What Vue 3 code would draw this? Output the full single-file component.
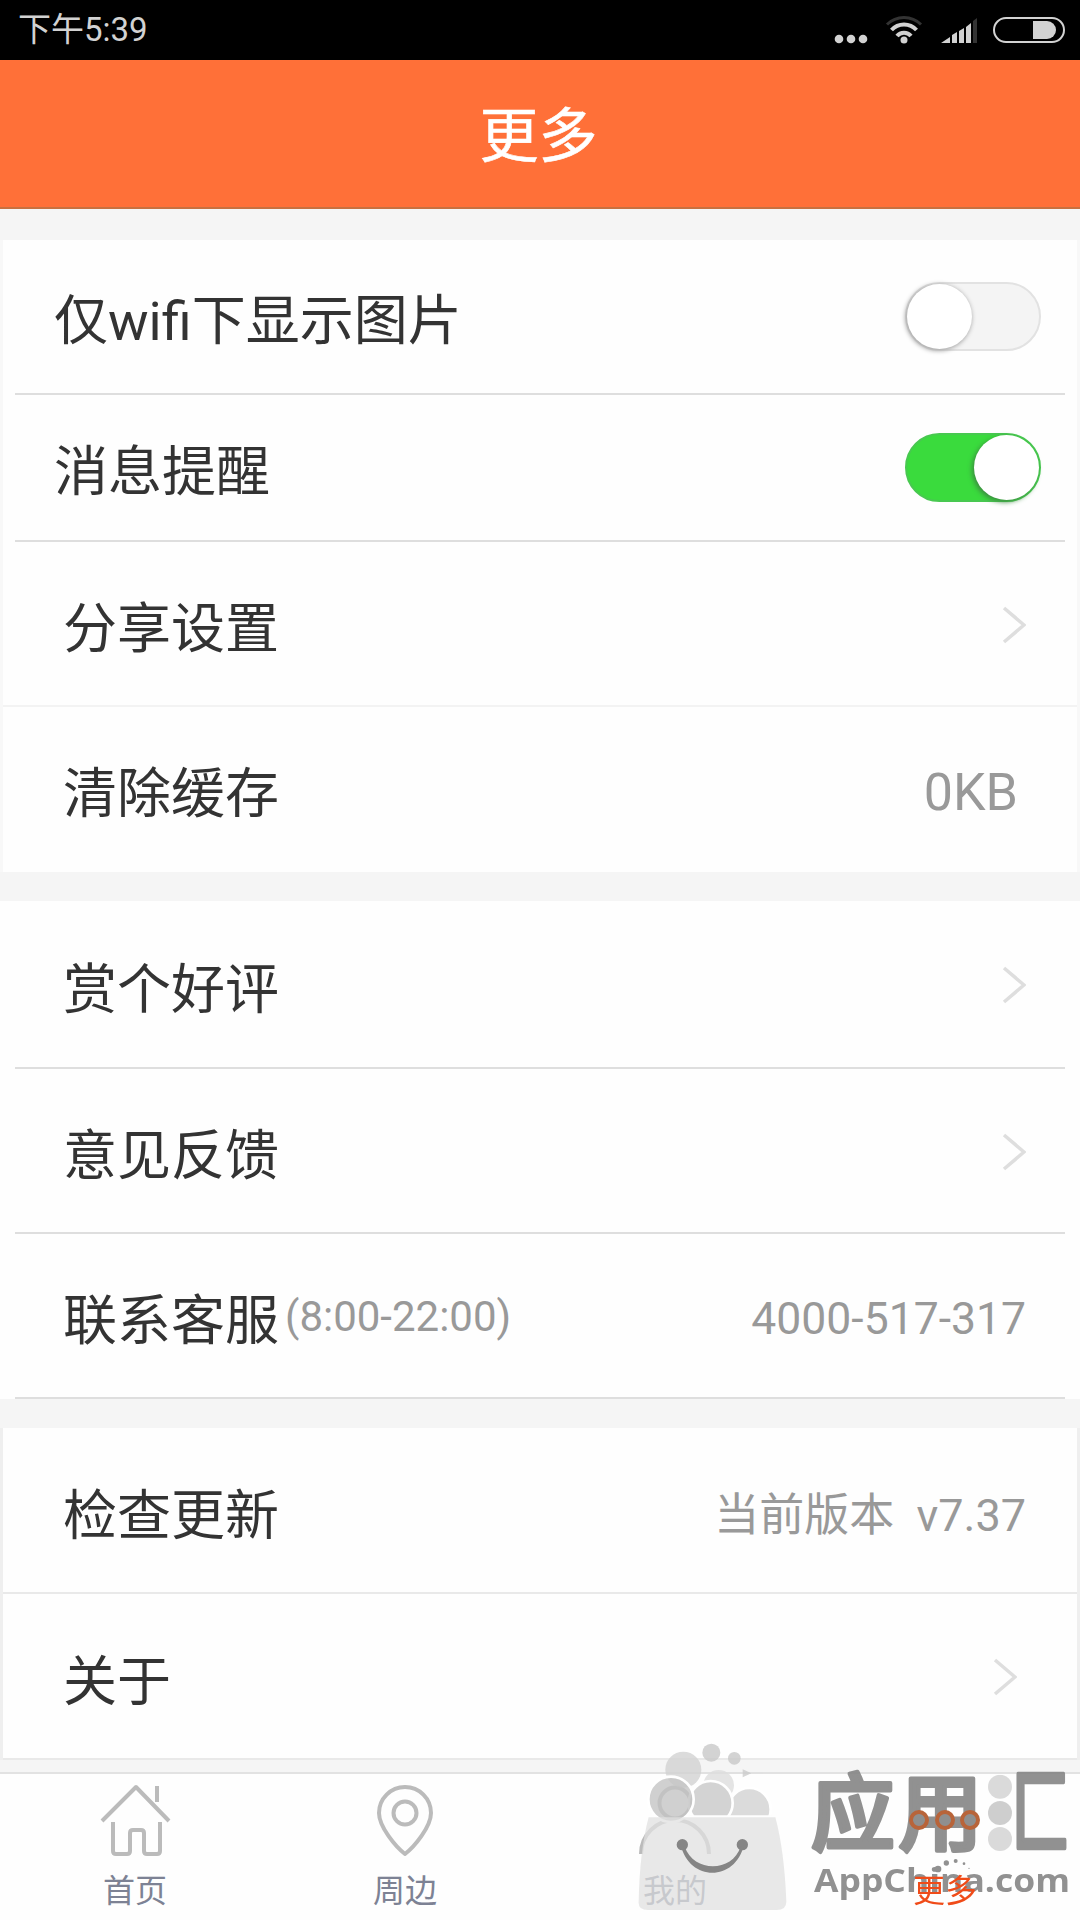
<script setup>
import { ref } from 'vue'

const wifiOnly = ref(false)
const notify = ref(true)
const current = ref('more')

const tabs = [
  { key: 'home', label: '首页' },
  { key: 'nearby', label: '周边' },
  { key: 'mine', label: '我的' },
  { key: 'more', label: '更多' },
]
</script>

<template>
  <main class="app">
    <div class="status">
      <span class="time">下午5:39</span>
      <svg class="status-icons" width="236" height="60" viewBox="0 0 236 60">
        <g fill="#d2d2d2">
          <circle cx="10" cy="39" r="4.3" />
          <circle cx="22" cy="39" r="4.3" />
          <circle cx="34" cy="39" r="4.3" />
          <circle cx="75" cy="40" r="3.5" />
          <path d="M112 43l9-6v6zM123 35l5-3v11h-5zM130 31l5-3v15h-5zM137 27l5-4v20h-5z" />
          <path d="M204 21h14a9 9 0 0 1 0 18h-14z" />
        </g>
        <path d="M144 21l4-3v25h-4z" fill="#333" />
        <g fill="none" stroke="#d2d2d2" stroke-width="4">
          <path d="M68 36a9 9 0 0 1 14 0" />
          <path d="M62.500 30a17 17 0 0 1 25 0" />
          <path d="M58 24.500a24 24 0 0 1 34 0" stroke="#333" stroke-width="3" />
          <rect x="165" y="18" width="70" height="24" rx="12" stroke-width="2" />
        </g>
      </svg>
    </div>

    <header class="header">更多</header>

    <section class="group first">
      <div class="row switch-row">
        <span>仅wifi下显示图片</span>
        <button class="switch" :class="{ on: wifiOnly }" @click="wifiOnly = !wifiOnly"><i></i></button>
      </div>
      <div class="row switch-row short">
        <span>消息提醒</span>
        <button class="switch" :class="{ on: notify }" @click="notify = !notify"><i></i></button>
      </div>
      <div class="row pale">
        <span>分享设置</span>
        <svg class="arrow" width="24" height="38" viewBox="0 0 24 38"><path d="M2 2l20 17L2 36" /></svg>
      </div>
      <div class="row none">
        <span>清除缓存</span>
        <span class="value cache">0KB</span>
      </div>
    </section>

    <section class="group second">
      <div class="row tall">
        <span>赏个好评</span>
        <svg class="arrow" width="24" height="38" viewBox="0 0 24 38"><path d="M2 2l20 17L2 36" /></svg>
      </div>
      <div class="row">
        <span>意见反馈</span>
        <svg class="arrow" width="24" height="38" viewBox="0 0 24 38"><path d="M2 2l20 17L2 36" /></svg>
      </div>
      <div class="row">
        <span class="service">联系客服<small>(8:00-22:00)</small></span>
        <span class="value phone">4000-517-317</span>
      </div>
    </section>

    <section class="group third">
      <div class="row full">
        <span>检查更新</span>
        <span class="value">当前版本&nbsp; v7.37</span>
      </div>
      <div class="row full">
        <span>关于</span>
        <svg class="arrow inset" width="24" height="38" viewBox="0 0 24 38"><path d="M2 2l20 17L2 36" /></svg>
      </div>
    </section>

    <nav class="tabs">
      <a v-for="tab in tabs" :key="tab.key" class="tab" :class="{ active: current == tab.key }" @click="current = tab.key">
        <svg width="72" height="72" viewBox="0 0 72 72">
          <template v-if="tab.key == 'home'">
            <path d="M3 37L37 3l33 34M58 2v16" />
            <path d="M14 38v29q0 3 3 3h11q3 0 3-3V49q0-3 3-3h8q3 0 3 3v18q0 3 3 3h10q3 0 3-3V38" />
          </template>
          <template v-else-if="tab.key == 'nearby'">
            <path d="M36 70C27 63 10 43 10 29a26 26 0 0 1 52 0C62 43 45 63 36 70z" />
            <circle cx="36" cy="29" r="11.500" />
          </template>
          <template v-else-if="tab.key == 'mine'">
            <circle cx="36" cy="19" r="15.500" />
            <path d="M2 70a34 34 0 0 1 68 0" />
          </template>
          <template v-else>
            <circle cx="10" cy="36" r="8" />
            <circle cx="36" cy="36" r="8" />
            <circle cx="61" cy="36" r="8" />
          </template>
        </svg>
        <span>{{ tab.label }}</span>
      </a>
    </nav>

    <svg class="mark" width="460" height="200" viewBox="0 0 1380 600">
      <clipPath id="above-bag">
        <rect x="0" y="0" width="600" height="286" />
      </clipPath>
      <!-- bag with bubbles -->
      <g clip-path="url(#above-bag)" opacity=".8">
        <circle cx="274" cy="98" r="27" fill="#c8c8c8" />
        <circle cx="343" cy="115" r="19" fill="#c8c8c8" />
        <path d="M368 148l26 12-26 12z" fill="#ccc" />
        <circle cx="296" cy="196" r="46" fill="#dedede" />
        <circle cx="190" cy="149" r="54" fill="#d2d2d2" />
        <g stroke="#fff" stroke-width="8">
          <circle cx="388" cy="268" r="64" fill="#d2d2d2" />
          <circle cx="272" cy="249" r="66" fill="#c9c9c9" />
        </g>
      </g>
      <circle cx="153" cy="238" r="68" fill="#c4c4c4" fill-opacity=".8" stroke="#fff" stroke-width="8" />
      <path d="M86 292H466Q493 392 499 545 499 570 470 570H84Q54 570 56 545 59 392 86 292z" fill="#e0e0e0" opacity=".75" />
      <g fill="#858585">
        <circle cx="187" cy="374" r="17" />
        <circle cx="367" cy="374" r="17" />
        <path d="M182 374C208 486 346 486 372 374L362 380C336 458 222 458 194 380z" />
      </g>
      <!-- wordmark -->
      <g transform="translate(510 60)" fill="#858585" opacity=".9">
        <text class="cn" x="62" y="311">应</text>
        <text class="cn" x="325" y="311">用</text>
        <text class="cn" transform="translate(664 318) scale(.7 1.09)">匚</text>
        <text class="en" x="72" y="455" textLength="768" lengthAdjust="spacingAndGlyphs">AppChina.com</text>
        <circle cx="444" cy="387" r="10" />
        <circle cx="469" cy="369" r="8" />
        <circle cx="497" cy="363" r="6" />
        <circle cx="522" cy="371" r="4" />
        <circle cx="537" cy="385" r="2" />
        <g fill="#bbb">
          <circle cx="630" cy="140" r="36" opacity=".6" />
          <circle cx="630" cy="219" r="36" opacity=".8" />
          <circle cx="630" cy="297" r="36" opacity=".6" />
        </g>
      </g>
    </svg>
  </main>
</template>

<style>
body {
  margin: 0;
  background: #f5f5f5;
}
</style>

<style scoped>
* {
  box-sizing: border-box;
}

.app {
  position: relative;
  width: 1080px;
  height: 1920px;
  overflow: hidden;
  display: flex;
  flex-direction: column;
  background: #f5f5f5;
  color: #333;
  font-family: Roboto, "Noto Sans CJK SC", sans-serif;
}

.status {
  height: 60px;
  padding: 0 15px 0 18px;
  display: flex;
  justify-content: space-between;
  align-items: center;
  background: #000;
  color: #d2d2d2;
  font-size: 33px;
}

.time {
  padding-bottom: 6px;
}

.header {
  height: 149px;
  padding: 0 3px 5px 0;
  display: flex;
  align-items: center;
  justify-content: center;
  background: #ff7038;
  border-bottom: 2px solid #c8703f;
  color: #fff;
  font-size: 59px;
  -webkit-text-stroke: 0.6px #fff;
}

.group {
  background: #fefefe;
}

.first {
  margin-top: 31px;
  border: solid #f8f8f8;
  border-width: 0 3px;
}

.second {
  margin-top: 29px;
}

.third {
  margin-top: 29px;
  border: solid #efefef;
  border-width: 0 3px;
}

.row {
  position: relative;
  height: 165px;
  padding: 0 54px 0 63px;
  display: flex;
  align-items: center;
  justify-content: space-between;
  font-size: 54px;
}

.first .row {
  padding: 0 51px 0 60px;
}

.third .row {
  height: 166px;
  padding: 0 51px 0 60px;
}

.row.tall {
  height: 168px;
}

.row::after {
  content: "";
  position: absolute;
  left: 15px;
  right: 15px;
  bottom: 0;
  height: 2px;
  background: #dedede;
}

.first .row::after {
  left: 12px;
  right: 12px;
}

.first .switch-row {
  height: 155px;
  padding: 0 36px 2px 51px;
}

.first .short {
  height: 147px;
}

.first .pale::after {
  left: 0;
  right: 0;
  background: #f3f3f3;
}

.row.none::after {
  display: none;
}

.third .full::after {
  left: 0;
  right: 0;
  background: #e9e9e9;
}

.value,
small {
  color: #999;
  font-size: 45px;
}

.service {
  display: flex;
  align-items: center;
}

small {
  margin-left: 6px;
  font-size: 42px;
}

.phone {
  padding-top: 4px;
  font-size: 44.500px;
}

.cache {
  margin-right: 8px;
  padding-top: 5px;
  font-size: 52px;
}

.arrow {
  fill: none;
  stroke: #dedede;
  stroke-width: 3.500;
}

.inset {
  margin-right: 9px;
}

.switch {
  width: 136px;
  height: 69px;
  padding: 0;
  display: flex;
  border: 2px solid #e2e2e2;
  border-radius: 35px;
  background: #f4f4f4;
}

.switch i {
  width: 65px;
  height: 65px;
  border-radius: 50%;
  background: #fff;
  box-shadow: -1px 1px 4px 1px #aaa;
}

.switch.on {
  justify-content: flex-end;
  border-color: #48c850;
  background: #3adb3d;
}

.switch.on i {
  box-shadow: -2px 2px 5px #3c8c40;
}

.tabs {
  height: 148px;
  margin-top: auto;
  display: flex;
  background: #fefefe;
  border-top: 2px solid #e2e2e2;
}

.tab {
  width: 270px;
  padding-top: 10px;
  display: flex;
  flex-direction: column;
  align-items: center;
  color: #7d8294;
  font-size: 32px;
  line-height: 46px;
}

.tab svg {
  margin-bottom: 12px;
  fill: none;
  stroke: #bbb;
  stroke-width: 4;
  stroke-linejoin: round;
}

.tab.active {
  color: #f04b18;
}

.tab.active svg {
  position: relative;
  z-index: 1;
  fill: #8f8f8f;
  stroke: #b8643a;
}

.tab.active span {
  position: relative;
  z-index: 2;
}

.mark {
  position: absolute;
  right: 0;
  bottom: 0;
  pointer-events: none;
}

.cn {
  font: 500 252px "Noto Sans CJK SC", sans-serif;
  stroke: #858585;
  stroke-width: 12;
  stroke-linejoin: round;
}

.en {
  font: 700 98px "Open Sans", sans-serif;
}
</style>
